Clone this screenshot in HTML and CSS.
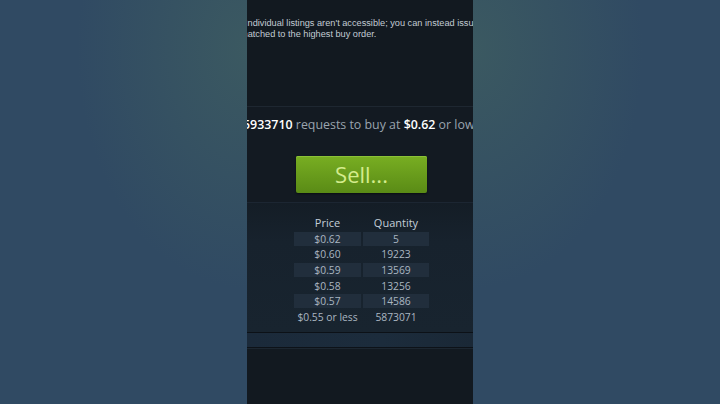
FILE: index.html
```html
<!DOCTYPE html>
<html>
<head>
    <title>Market - Buy Orders</title>
    <link rel="stylesheet" href="styles.css">
</head>
<body>

    <div class="frame">
        <div class="side side-left"></div>

        <div class="market">
            <div class="notice">
                <p class="line-one">Individual listings aren't accessible; you can instead issue a buy order that will be</p>
                <p class="line-two">matched to the highest buy order.</p>
            </div>

            <div class="buy">
                <p class="buy-summary"><span class="hl">5933710</span> requests to buy at <span class="hl">$0.62</span> or lower</p>
                <button class="sell-button">Sell...</button>
            </div>

            <div class="orders">
                <div class="order-table">
                    <div class="head">Price</div>
                    <div class="head">Quantity</div>

                    <div class="cell odd">$0.62</div>
                    <div class="cell odd">5</div>
                    <div class="cell">$0.60</div>
                    <div class="cell">19223</div>
                    <div class="cell odd">$0.59</div>
                    <div class="cell odd">13569</div>
                    <div class="cell">$0.58</div>
                    <div class="cell">13256</div>
                    <div class="cell odd">$0.57</div>
                    <div class="cell odd">14586</div>
                    <div class="cell">$0.55 or less</div>
                    <div class="cell">5873071</div>
                </div>
            </div>

            <div class="band"></div>
            <div class="bottom"></div>
        </div>

        <div class="side side-right"></div>
    </div>

</body>
</html>
```

FILE: styles.css
```css
body {
    margin: 0;
    width: 720px;
    height: 404px;
    overflow: hidden;
    background: #304a63;
    font-family: "Open Sans", sans-serif;
}

.frame {
    display: flex;
    height: 404px;
}

.side {
    width: 247px;
    flex-shrink: 0;
}

.side-left {
    background: radial-gradient(ellipse 170px 240px at 100% 12%, #3b5961 0%, rgba(59, 89, 97, 0) 100%), #304a63;
}

.side-right {
    background: radial-gradient(ellipse 170px 240px at 0% 12%, #3b5961 0%, rgba(59, 89, 97, 0) 100%), #304a63;
}

.market {
    width: 226px;
    flex-shrink: 0;
    display: flex;
    flex-direction: column;
    overflow: hidden;
    background-color: #121920;
}

.notice {
    height: 107px;
    border-bottom: 1px solid #1e2731;
    padding-top: 18px;
    box-sizing: border-box;
}

.notice p {
    margin: 0;
    font-family: "Liberation Sans", Arial, sans-serif;
    font-size: 9.2px;
    line-height: 11px;
    color: #c3ccd4;
    white-space: nowrap;
}

.notice .line-one {
    margin-left: -2px;
}

.notice .line-two {
    margin-left: -7px;
}

.buy {
    height: 95px;
    padding-top: 10px;
    box-sizing: border-box;
    display: flex;
    flex-direction: column;
    background-color: #131a22;
}

.buy-summary {
    margin: 0 0 0 -4px;
    font-size: 12.4px;
    line-height: 16px;
    color: #9aa4ae;
    white-space: nowrap;
}

.buy-summary .hl {
    color: #ffffff;
    font-weight: 600;
}

.sell-button {
    margin: 23px 0 0 49px;
    width: 131px;
    height: 37px;
    border: none;
    border-radius: 2px;
    background: linear-gradient(to bottom, #78ae22, #5a8b16);
    box-shadow: inset 0 1px 0 #8bc237, 0 1px 2px rgba(0, 0, 0, 0.5);
    color: #d4ec8c;
    font-family: "Open Sans", sans-serif;
    font-size: 22px;
    line-height: 37px;
    padding: 0;
}

.orders {
    height: 130px;
    padding-top: 13px;
    box-sizing: border-box;
    border-top: 1px solid #1c2632;
    background: linear-gradient(to bottom, #141d26, #17222d 30%, #18242f);
}

.order-table {
    display: grid;
    grid-template-columns: 67px 66px;
    grid-auto-rows: 14px;
    column-gap: 2px;
    row-gap: 1.7px;
    margin-left: 47px;
    font-size: 10.3px;
    line-height: 14px;
    text-align: center;
    color: #aab6c1;
}

.order-table .head {
    font-size: 11px;
    color: #c3ced8;
    margin-bottom: 1.3px;
}

.cell.odd {
    background-color: #212e3c;
}

.band {
    height: 14px;
    border-top: 1px solid #0c1117;
    border-bottom: 1px solid #0d1218;
    background: linear-gradient(to right, #1b2a3a, #1c2c3c 60%, #1a2836);
}

.bottom {
    flex: 1;
    border-top: 1px solid #1c2630;
    background-color: #121920;
}
```
